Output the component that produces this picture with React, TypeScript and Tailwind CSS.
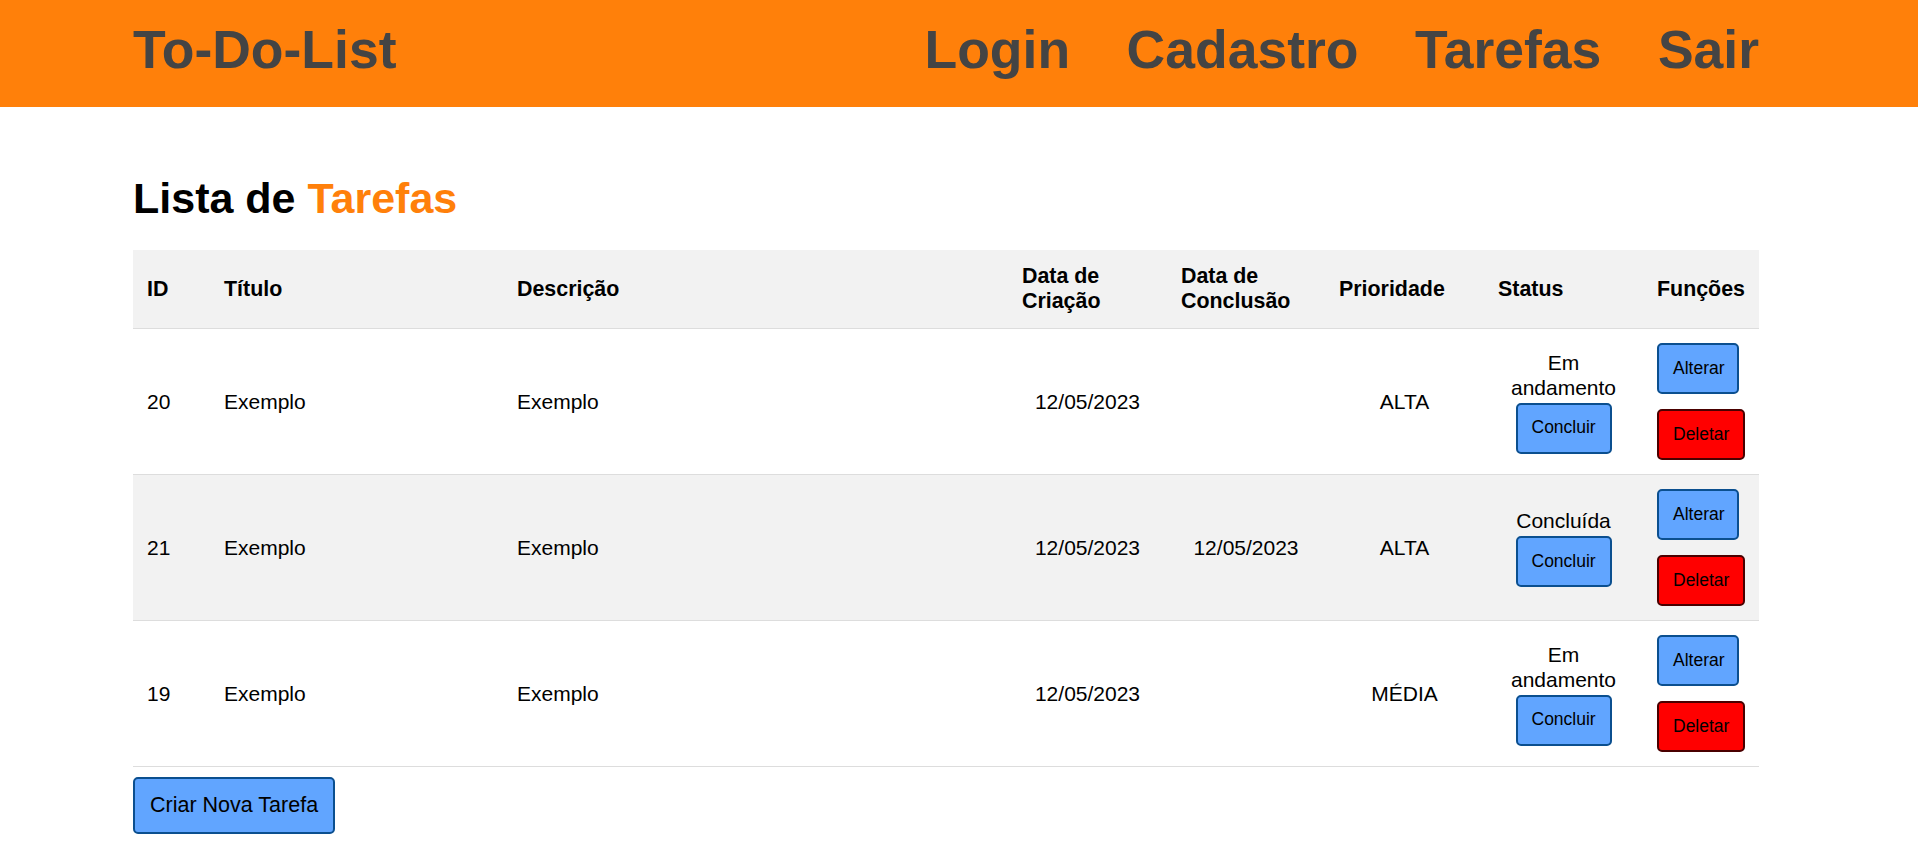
const tasks = [
  { id: 20, titulo: "Exemplo", descricao: "Exemplo", criacao: "12/05/2023", conclusao: "", prioridade: "ALTA", status: "Em andamento" },
  { id: 21, titulo: "Exemplo", descricao: "Exemplo", criacao: "12/05/2023", conclusao: "12/05/2023", prioridade: "ALTA", status: "Concluída" },
  { id: 19, titulo: "Exemplo", descricao: "Exemplo", criacao: "12/05/2023", conclusao: "", prioridade: "MÉDIA", status: "Em andamento" },
];

const blueBtn =
  "h-[51px] rounded-[5px] border-2 border-[#0b4f8f] bg-[#61a5ff] px-[14px] text-[17.5px] leading-none text-black whitespace-nowrap";
const redBtn =
  "h-[51px] rounded-[5px] border-2 border-[#4a0000] bg-[#ff0000] px-[14px] text-[17.5px] leading-none text-black whitespace-nowrap";

const App = () => {
  return (
    <div className="min-h-screen bg-white font-['Liberation_Sans',Arial,sans-serif] text-black">
      <header className="h-[107px] bg-[#ff800a]">
        <div className="ml-[133px] flex w-[1626px] items-start justify-between pt-[19px] text-[53.5px] font-bold leading-[61px] text-[#444444]">
          <h1>To-Do-List</h1>
          <nav className="flex gap-[56.5px]">
            <a href="#">Login</a>
            <a href="#">Cadastro</a>
            <a href="#">Tarefas</a>
            <a href="#">Sair</a>
          </nav>
        </div>
      </header>

      <main className="ml-[133px] w-[1626px]">
        <h2 className="mt-[67px] text-[43px] font-bold leading-[48px]">
          Lista de <span className="text-[#ff800a]">Tarefas</span>
        </h2>

        <table className="mt-[28px] w-full table-fixed border-collapse text-[21px] leading-[25px]">
          <colgroup>
            <col className="w-[77px]" />
            <col className="w-[293px]" />
            <col className="w-[505px]" />
            <col className="w-[159px]" />
            <col className="w-[158px]" />
            <col className="w-[159px]" />
            <col className="w-[159px]" />
            <col className="w-[116px]" />
          </colgroup>
          <thead>
            <tr className="border-b border-[#dddddd] bg-[#f2f2f2] text-left text-[21.4px] font-bold">
              <th className="px-[14px] py-[14px] align-middle">ID</th>
              <th className="px-[14px] py-[14px] align-middle">Título</th>
              <th className="px-[14px] py-[14px] align-middle">Descrição</th>
              <th className="px-[14px] py-[14px] align-middle">Data de Criação</th>
              <th className="px-[14px] py-[14px] align-middle">Data de Conclusão</th>
              <th className="px-[14px] py-[14px] align-middle">Prioridade</th>
              <th className="px-[14px] py-[14px] align-middle">Status</th>
              <th className="px-[14px] py-[14px] align-middle">Funções</th>
            </tr>
          </thead>
          <tbody>
            {tasks.map((t, i) => (
              <tr key={t.id} className={`border-b border-[#dddddd] ${i % 2 === 1 ? "bg-[#f2f2f2]" : "bg-white"}`}>
                <td className="px-[14px] py-[14px] align-middle">{t.id}</td>
                <td className="px-[14px] py-[14px] align-middle">{t.titulo}</td>
                <td className="px-[14px] py-[14px] align-middle">{t.descricao}</td>
                <td className="px-[14px] py-[14px] text-center align-middle">{t.criacao}</td>
                <td className="px-[14px] py-[14px] text-center align-middle">{t.conclusao}</td>
                <td className="px-[14px] py-[14px] text-center align-middle">{t.prioridade}</td>
                <td className="px-[14px] py-[14px] text-center align-middle">
                  <div className="flex flex-col items-center">
                    <span>{t.status}</span>
                    <button className={`${blueBtn} mt-[3px] w-[96px]`}>Concluir</button>
                  </div>
                </td>
                <td className="px-[14px] py-[14px] align-middle">
                  <div className="flex flex-col items-start gap-[15px]">
                    <button className={`${blueBtn} w-[82px]`}>Alterar</button>
                    <button className={`${redBtn} w-[88px]`}>Deletar</button>
                  </div>
                </td>
              </tr>
            ))}
          </tbody>
        </table>

        <button className="mt-[10px] h-[57px] rounded-[5px] border-2 border-[#0b4f8f] bg-[#61a5ff] px-[15px] text-[21.5px] leading-none text-black">
          Criar Nova Tarefa
        </button>
      </main>
    </div>
  );
};

export default App;
